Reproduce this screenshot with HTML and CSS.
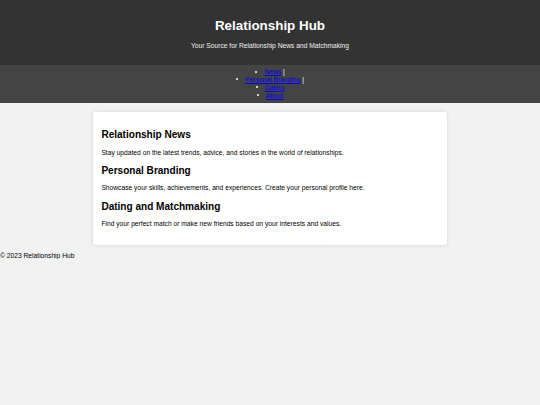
FILE: index.html
```html
<!DOCTYPE html>
<html lang="en">
<head>
<meta charset="utf-8">
<title>Relationship Hub</title>
<link rel="stylesheet" href="styles.css">
</head>
<body>
<header class="site-header">
  <h1 class="site-title">Relationship Hub</h1>
  <p class="site-tagline">Your Source for Relationship News and Matchmaking</p>
</header>
<nav class="site-nav">
  <ul class="nav-list">
    <li class="nav-item"><a href="#news">News</a> |</li>
    <li class="nav-item"><a href="#branding">Personal Branding</a> |</li>
    <li class="nav-item"><a href="#dating">Dating</a></li>
    <li class="nav-item"><a href="#about">About</a></li>
  </ul>
</nav>
<main class="content-card">
  <section class="section" id="news">
    <h2 class="section-title">Relationship News</h2>
    <p class="section-text">Stay updated on the latest trends, advice, and stories in the world of relationships.</p>
  </section>
  <section class="section" id="branding">
    <h2 class="section-title">Personal Branding</h2>
    <p class="section-text">Showcase your skills, achievements, and experiences. Create your personal profile here.</p>
  </section>
  <section class="section" id="dating">
    <h2 class="section-title">Dating and Matchmaking</h2>
    <p class="section-text">Find your perfect match or make new friends based on your interests and values.</p>
  </section>
</main>
<footer class="site-footer">&copy; 2023 Relationship Hub</footer>
</body>
</html>
```
FILE: styles.css
```css
html, body {
  margin: 0;
  padding: 0;
}

body {
  font-family: "Liberation Sans", Arial, sans-serif;
  font-size: 6.7px;
  line-height: normal;
  background: #f2f2f2;
  color: #000;
}

.site-header {
  background: #333;
  color: #fff;
  text-align: center;
  padding: 8.9px 8.4px 9.6px;
}

.site-title {
  font-size: 13.4px;
  font-weight: bold;
  margin: 9px 0;
}

.site-tagline {
  margin: 6.7px 0;
  color: #f0f0f0;
}

.site-nav {
  background: #444;
  color: #fff;
  text-align: center;
  padding: 3.1px 0;
}

.nav-list {
  margin: 0;
  padding: 0;
  list-style: none;
}

.nav-item {
  line-height: 7.8px;
}

.nav-item::before {
  content: "";
  display: inline-block;
  width: 2px;
  height: 2px;
  border-radius: 50%;
  background: #fff;
  margin-right: 7.2px;
  vertical-align: 1.6px;
}

.nav-item a {
  color: #0000ee;
}

.content-card {
  display: block;
  box-sizing: border-box;
  width: 354px;
  margin: 9.2px auto 7px;
  padding: 0 8.4px;
  overflow: hidden;
  background: #fff;
  border-radius: 2px;
  box-shadow: 0 0 4px rgba(0, 0, 0, 0.12);
}

.section-title {
  font-size: 10.05px;
  font-weight: bold;
  margin: 8.45px 0;
}

.section-text {
  margin: 6.7px 0;
  line-height: 7.9px;
}

.section:first-child .section-title {
  margin-top: 17.4px;
}

.section:last-child .section-text {
  margin-bottom: 16.8px;
}
```
